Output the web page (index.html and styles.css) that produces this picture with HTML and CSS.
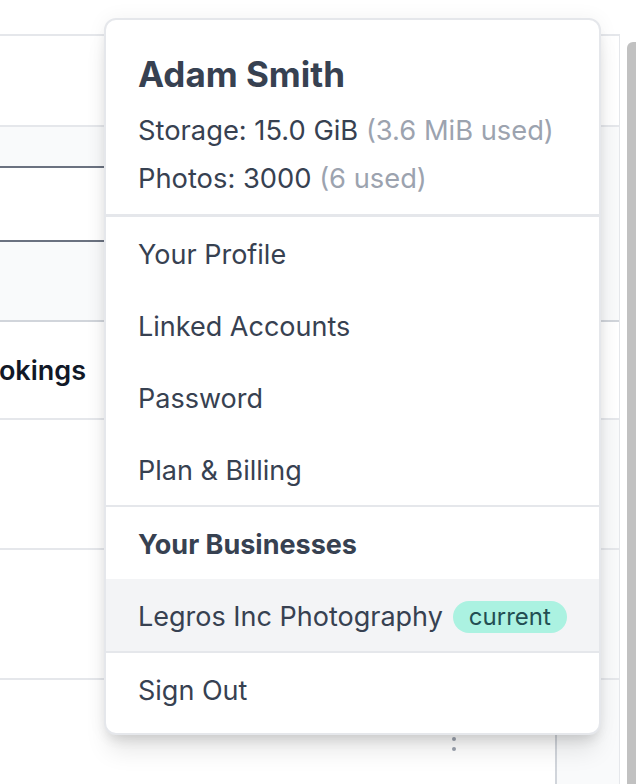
FILE: index.html
```html
<!DOCTYPE html>
<html lang="en">
<head>
    <meta charset="UTF-8">
    <meta name="viewport" content="width=device-width, initial-scale=1.0">
    <title>Account Menu</title>
    <link rel="stylesheet" href="styles.css">
</head>
<body>
    <div class="page">
        <div class="table-wrap">
            <div class="row row-top">
                <div class="cell-main"></div>
                <div class="cell-side"></div>
            </div>
            <div class="row row-filter">
                <div class="cell-main">
                    <div class="filter-input"></div>
                </div>
                <div class="cell-side"></div>
            </div>
            <div class="row row-head">
                <div class="cell-main">
                    <span class="col-title">Bookings</span>
                </div>
                <div class="cell-side"></div>
            </div>
            <div class="row row-item">
                <div class="cell-main"></div>
                <div class="cell-side"></div>
            </div>
            <div class="row row-item">
                <div class="cell-main"></div>
                <div class="cell-side"></div>
            </div>
            <div class="row row-item">
                <div class="cell-main cell-actions">
                    <span class="kebab"><i></i><i></i><i></i></span>
                </div>
                <div class="cell-side"></div>
            </div>
        </div>
        <div class="scroll-thumb"></div>
    </div>

    <!-- account dropdown -->
    <div class="menu">
        <div class="menu-head">
            <h2 class="menu-name">Adam Smith</h2>
            <p class="menu-stat">Storage: 15.0 GiB <span class="muted">(3.6 MiB used)</span></p>
            <p class="menu-stat">Photos: 3000 <span class="muted">(6 used)</span></p>
        </div>
        <div class="menu-group">
            <a href="#" class="menu-item">Your Profile</a>
            <a href="#" class="menu-item">Linked Accounts</a>
            <a href="#" class="menu-item">Password</a>
            <a href="#" class="menu-item">Plan &amp; Billing</a>
        </div>
        <div class="menu-group">
            <div class="menu-item menu-label">Your Businesses</div>
            <a href="#" class="menu-item is-active">Legros Inc Photography <span class="badge">current</span></a>
        </div>
        <div class="menu-group menu-last">
            <a href="#" class="menu-item">Sign Out</a>
        </div>
    </div>
</body>
</html>
```

FILE: styles.css
```css
body {
    margin: 0;
    font-family: Inter, "Noto Sans", sans-serif;
    color: #374151;
    background: #fff;
    overflow: hidden;
}

.page {
    display: flex;
    height: 784px;
}

/* table behind the menu */
.table-wrap {
    width: 620px;
    margin-top: 34px;
    border-top: 2px solid #e5e7eb;
    border-right: 1px solid #e5e7eb;
    box-sizing: border-box;
}

.row {
    display: flex;
    box-sizing: border-box;
}

.cell-main {
    width: 557px;
    border-right: 2px solid #d1d5db;
    box-sizing: border-box;
    display: flex;
}

.cell-side {
    flex: 1;
    background: #f9fafb;
}

.row-top {
    height: 91px;
    border-bottom: 2px solid #e5e7eb;
}

.row-top .cell-side {
    background: #fff;
}

.row-filter {
    height: 195px;
    background: #f9fafb;
    border-bottom: 2px solid #d1d5db;
}

.row-filter .cell-main {
    padding-top: 39px;
}

.filter-input {
    width: 480px;
    height: 72px;
    background: #fff;
    border-top: 2px solid #6b7280;
    border-bottom: 2px solid #6b7280;
}

.row-head {
    height: 98px;
    border-bottom: 2px solid #e5e7eb;
}

.row-head .cell-main {
    width: 86px;
    border-right: none;
    justify-content: flex-end;
    align-items: center;
    white-space: nowrap;
}

.row-head .cell-side {
    background: #fff;
}

.col-title {
    font-size: 27px;
    font-weight: 600;
    color: #111827;
}

.row-item {
    height: 130px;
    border-bottom: 2px solid #e5e7eb;
}

.cell-actions {
    justify-content: flex-end;
    padding-right: 99px;
    padding-top: 47px;
}

.kebab {
    display: flex;
    flex-direction: column;
    gap: 6px;
}

.kebab i {
    width: 4px;
    height: 4px;
    border-radius: 50%;
    background: #9ca3af;
}

.scroll-thumb {
    width: 9px;
    margin-left: 7px;
    margin-top: 42px;
    background: #c1c1c1;
    border-top-left-radius: 6px;
}

/* dropdown */
.menu {
    position: absolute;
    left: 104px;
    top: 18px;
    width: 497px;
    box-sizing: border-box;
    background: #fff;
    border: 2px solid #e5e7eb;
    border-radius: 12px;
    overflow: hidden;
    box-shadow: 0 20px 25px -5px rgba(0, 0, 0, 0.1), 0 8px 12px -4px rgba(0, 0, 0, 0.1), 0 0 20px rgba(0, 0, 0, 0.05);
}

.menu-head {
    padding: 34px 32px 19px;
    border-bottom: 3px solid #e5e7eb;
}

.menu-name {
    margin: 0 0 21px;
    font-size: 35px;
    line-height: 40px;
    font-weight: 700;
    color: #374151;
}

.menu-stat {
    margin: 0;
    font-size: 27.3px;
    line-height: 32px;
}

.menu-stat + .menu-stat {
    margin-top: 16px;
}

.muted {
    color: #9ca3af;
}

.menu-group + .menu-group {
    border-top: 2px solid #e5e7eb;
}

.menu-last {
    padding-bottom: 8px;
}

.menu-item {
    display: flex;
    align-items: center;
    gap: 10px;
    padding: 22px 32px 18px;
    font-size: 27px;
    line-height: 32px;
    color: #374151;
    text-decoration: none;
}

.menu-label {
    font-weight: 700;
}

.is-active {
    background: #f3f4f6;
}

.badge {
    padding: 0 16px;
    border-radius: 999px;
    background: #abf2e1;
    color: #234e52;
    font-size: 24px;
    line-height: 32px;
}
```
